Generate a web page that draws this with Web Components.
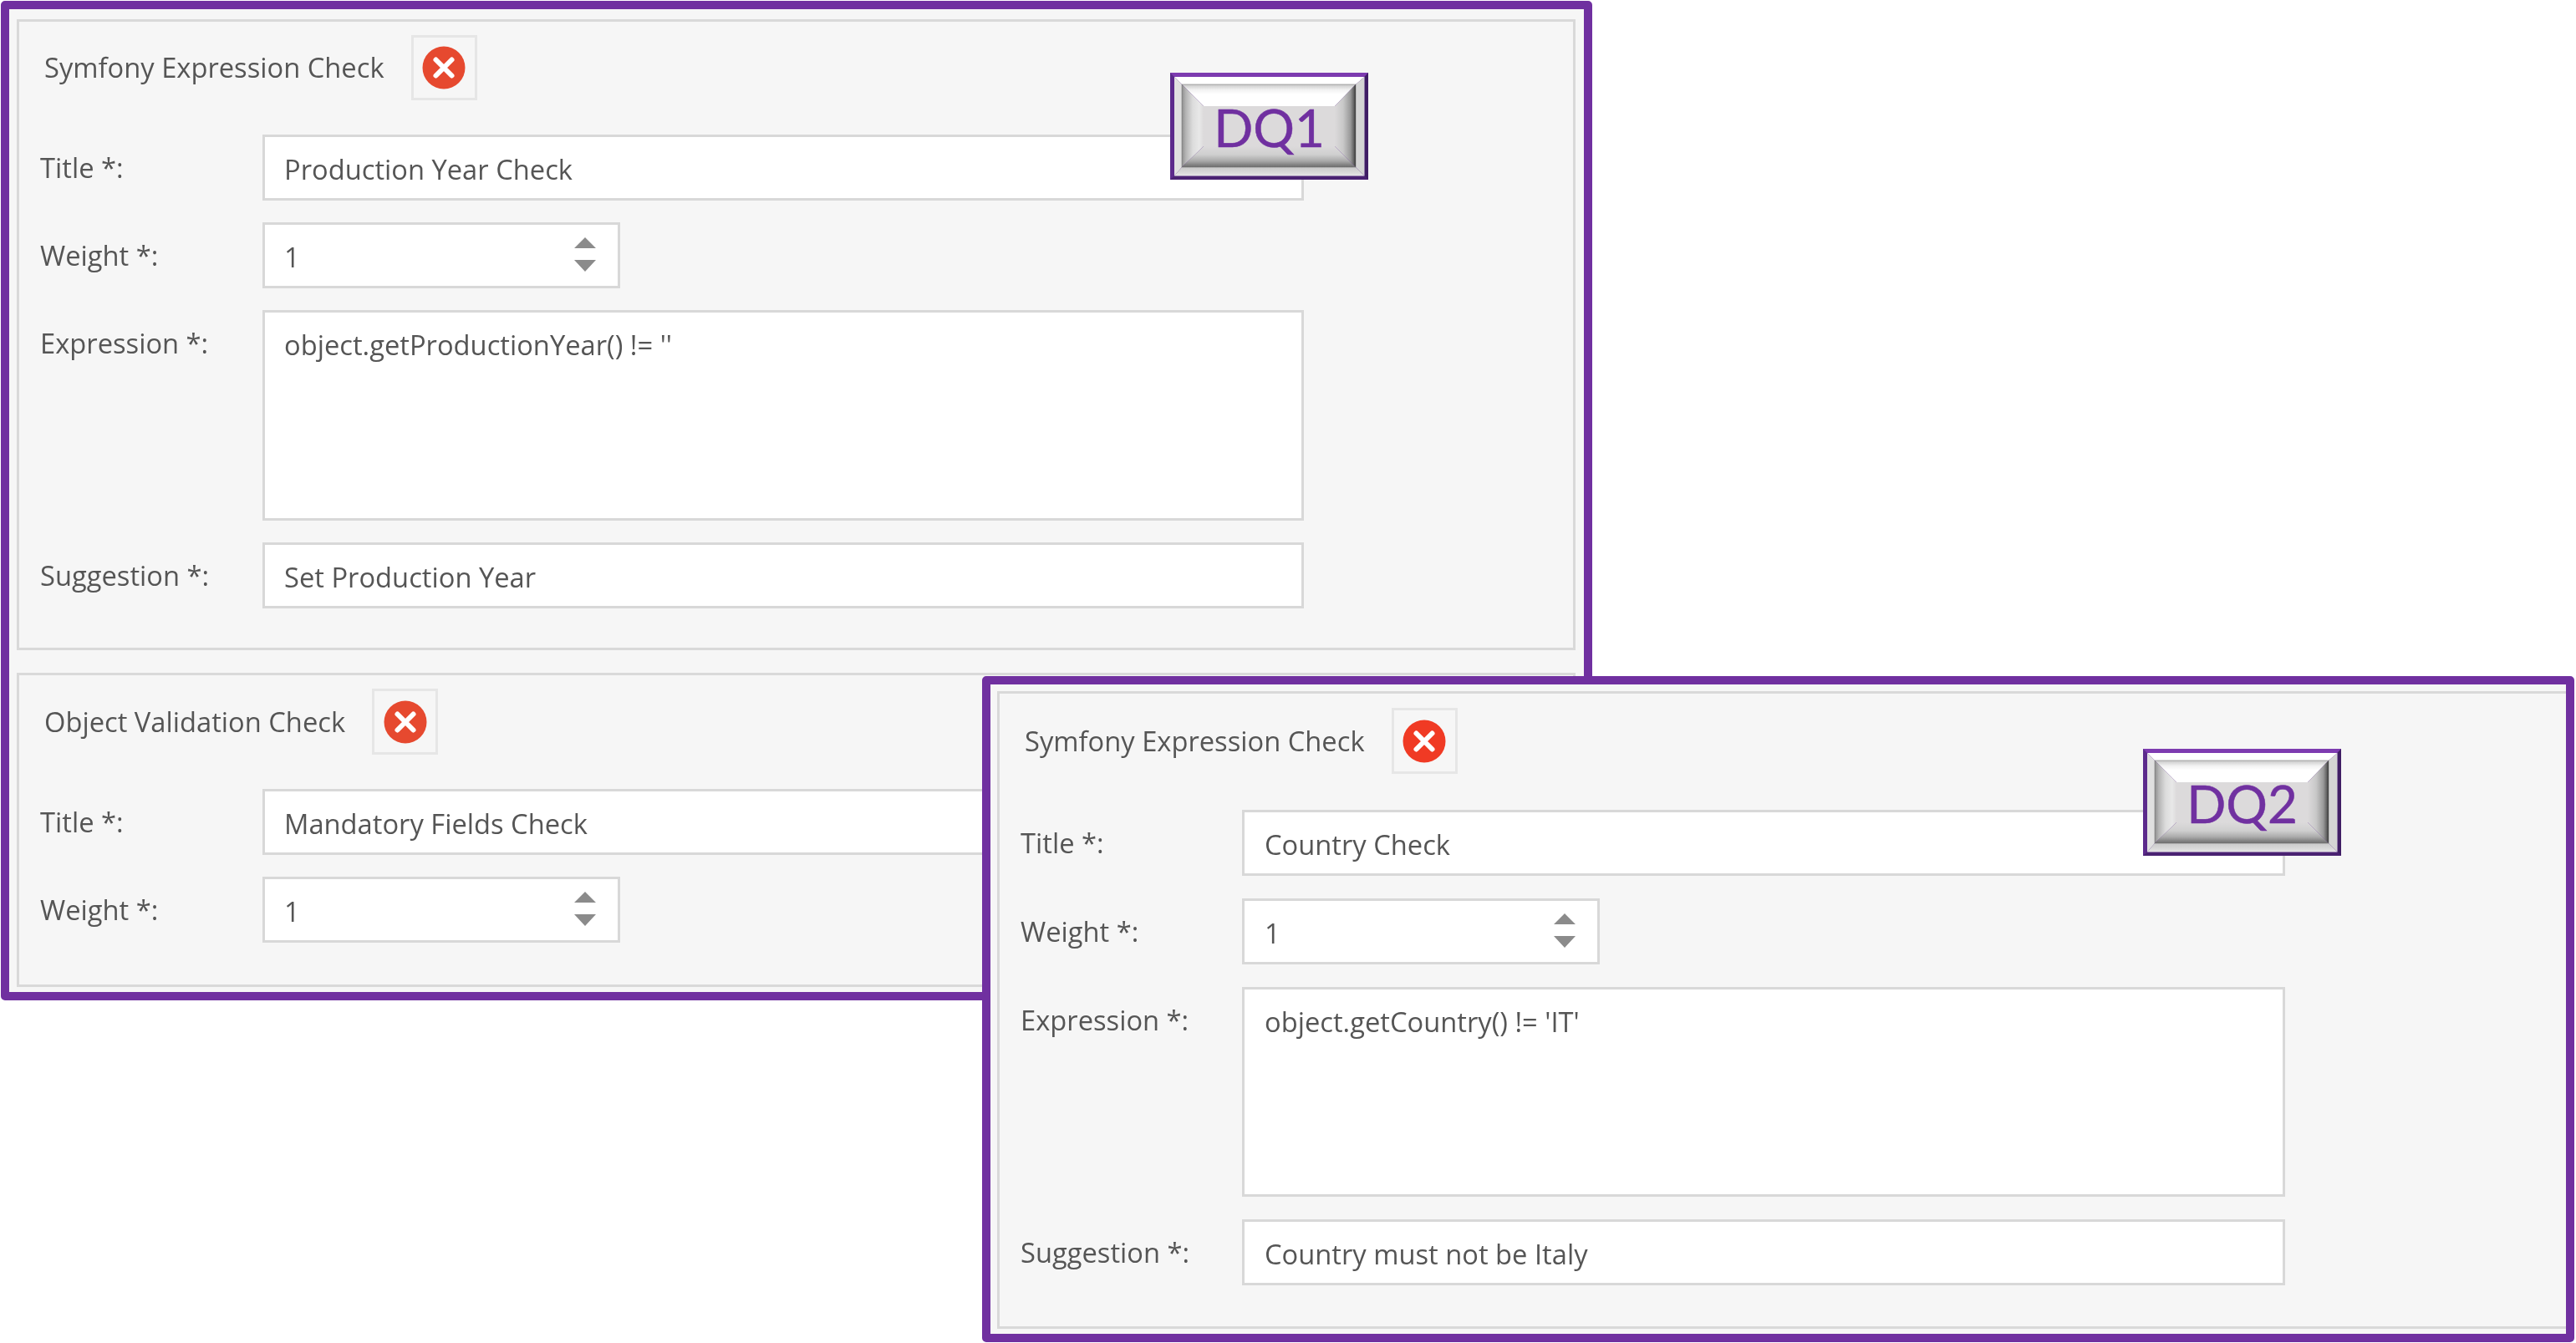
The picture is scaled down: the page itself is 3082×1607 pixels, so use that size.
<!DOCTYPE html>
<html lang="en"><head><meta charset="utf-8"><title>Data quality checks</title>
<style>
html,body{margin:0;padding:0;background:#fff}
body{width:3082px;height:1607px;position:relative;overflow:hidden;font-family:"Open Sans",sans-serif;color:#555}
</style></head><body>
<template id="t-frame"><style>
:host{display:block;position:absolute;box-sizing:border-box;border:10px solid #7030a0;border-radius:5px;background:#f6f6f6;overflow:hidden;padding:var(--pad,12px 10px 9px 9px)}
.stack{display:flex;flex-direction:column;gap:27px}
</style><div class="stack"><slot></slot></div></template>

<template id="t-panel"><style>
:host{display:block;box-sizing:border-box;border:3px solid #d9d9d9;background:#f6f6f6;padding:var(--pt,16px) 0 var(--pb,47px) 25px;margin-right:var(--panel-mr,0)}
header{display:flex;align-items:center;gap:32px;margin:0 0 var(--hm,41px) 5px;height:var(--hh,78px)}
h2{margin:0;font:400 32.7px/80px "Open Sans",sans-serif;color:#555;filter:blur(.55px)}
.rows{display:flex;flex-direction:column;gap:var(--gap,26px)}
</style><header><h2></h2><remove-button></remove-button></header><div class="rows"><slot></slot></div></template>

<template id="t-remove"><style>
:host{box-sizing:border-box;width:79px;height:var(--hh,78px);border:3px solid #e6e6e6;display:flex;align-items:center;justify-content:center;filter:blur(.4px)}
svg{display:block;width:52px;height:52px}
</style><svg viewBox="0 0 52 52" aria-hidden="true"><circle cx="26" cy="26" r="25.5" fill="var(--x-color,#e6492f)"/><path d="M16.5 16.5 35.5 35.5M35.5 16.5 16.5 35.5" stroke="#fff" stroke-width="6" stroke-linecap="round"/></svg></template>

<template id="t-row"><style>
:host{display:flex;align-items:flex-start}
label{flex:none;width:var(--lw,266px);height:78px;font:400 32.7px/80px "Open Sans",sans-serif;color:#555;filter:blur(.55px)}
</style><label></label><slot></slot></template>

<template id="t-field"><style>
:host{display:flex;justify-content:space-between;align-items:center;box-sizing:border-box;width:var(--w,var(--fw,1246px));height:var(--h,79px);background:#fff;border:3px solid #d8d8d8}
span{align-self:flex-start;padding-left:var(--fp,23px);font:400 32.7px/70px "Open Sans",sans-serif;color:#555;margin-top:4px;filter:blur(.55px)}
svg{display:block;width:26px;height:41px;margin:0 26px 2px 0;filter:blur(.4px)}
</style><span><slot></slot></span></template>

<template id="t-badge"><style>
:host{display:flex;position:absolute;width:237px;height:128px;align-items:center;justify-content:center;box-sizing:border-box;padding-top:2px}
svg{position:absolute;inset:0;width:100%;height:100%}
span{position:relative;font:400 62px/1 Lato,sans-serif;color:#7030a0;-webkit-text-stroke:.5px #7030a0}
</style><svg viewBox="0 0 237 128" aria-hidden="true">
<defs>
<linearGradient id="gt" x1="0" y1="0" x2="0" y2="1"><stop offset="0" stop-color="#c8c8c8"/><stop offset=".25" stop-color="#f2f2f2"/><stop offset=".45" stop-color="#fff"/><stop offset="1" stop-color="#fff"/></linearGradient>
<linearGradient id="gl" x1="0" y1="0" x2="1" y2="0"><stop offset="0" stop-color="#8e8e8e"/><stop offset=".18" stop-color="#b4b4b4"/><stop offset=".5" stop-color="#dcdcdc"/><stop offset=".8" stop-color="#e8e8e8"/><stop offset="1" stop-color="#dcdadb"/></linearGradient>
<linearGradient id="gr" x1="0" y1="0" x2="1" y2="0"><stop offset="0" stop-color="#dcdadb"/><stop offset=".4" stop-color="#c8c8c8"/><stop offset=".75" stop-color="#999"/><stop offset=".9" stop-color="#666"/><stop offset="1" stop-color="#333"/></linearGradient>
<linearGradient id="gb" x1="0" y1="0" x2="0" y2="1"><stop offset="0" stop-color="#dcdadb"/><stop offset=".4" stop-color="#cfcfcf"/><stop offset=".7" stop-color="#aaa"/><stop offset=".9" stop-color="#808080"/><stop offset="1" stop-color="#707070"/></linearGradient>
<linearGradient id="go" x1="0" y1="0" x2="0" y2="1"><stop offset="0" stop-color="#c9c9c9"/><stop offset=".5" stop-color="#d6d6d6"/><stop offset="1" stop-color="#e6e6e6"/></linearGradient>
</defs>
<rect width="237" height="128" fill="#5c2a8c"/>
<polygon points="0,0 237,0 232.500,5 5,5" fill="#7d3bb0"/>
<polygon points="0,128 237,128 232.500,123.500 5,123.500" fill="#4a2272"/>
<polygon points="237,0 237,128 232.500,123.500 232.500,5" fill="#3f1d64"/>
<polygon points="5,5 232.500,5 222,14 14,14" fill="#fff"/>
<polygon points="5,5 14,14 14,113 5,123.500" fill="#e0e0e0"/>
<polygon points="232.500,5 222,14 222,113 232.500,123.500" fill="#d4d4d4"/>
<polygon points="5,123.500 14,113 222,113 232.500,123.500" fill="url(#go)"/>
<rect x="40" y="40" width="157" height="48" fill="#dcdadb"/>
<polygon points="14,14 222,14 197,40 40,40" fill="url(#gt)"/>
<polygon points="14,14 40,40 40,88 14,113" fill="url(#gl)"/>
<polygon points="222,14 197,40 197,88 222,113" fill="url(#gr)"/>
<polygon points="14,113 40,88 197,88 222,113" fill="url(#gb)"/>
<rect x="14" y="14" width="208" height="99" fill="none" stroke="#6a6a6a" stroke-opacity=".5" stroke-width="1"/>
</svg><span><slot></slot></span></template>

<check-frame style="left:1px;top:1px;width:1904px;height:1196px">
  <check-panel heading="Symfony Expression Check">
    <form-row label="Title *:"><text-field>Production Year Check</text-field></form-row>
    <form-row label="Weight *:"><text-field number>1</text-field></form-row>
    <form-row label="Expression *:"><text-field style="--h:252px">object.getProductionYear() != ''</text-field></form-row>
    <form-row label="Suggestion *:"><text-field>Set Production Year</text-field></form-row>
  </check-panel>
  <check-panel heading="Object Validation Check" style="--pt:16px;--pb:50px;--hh:79px">
    <form-row label="Title *:"><text-field>Mandatory Fields Check</text-field></form-row>
    <form-row label="Weight *:"><text-field number>1</text-field></form-row>
  </check-panel>
</check-frame>
<dq-badge style="left:1400px;top:87px">DQ1</dq-badge>
<check-frame style="left:1175px;top:809px;width:1905px;height:797px;--pad:8px 0 8px 8px;--x-color:#f03a24;--panel-mr:-20px;--lw:265px;--fw:1248px;--fp:24px">
  <check-panel heading="Symfony Expression Check" style="--pt:17px;--pb:49px;--hh:79px;--hm:43px;--gap:27px">
    <form-row label="Title *:"><text-field>Country Check</text-field></form-row>
    <form-row label="Weight *:"><text-field number>1</text-field></form-row>
    <form-row label="Expression *:"><text-field style="--h:251px">object.getCountry() != 'IT'</text-field></form-row>
    <form-row label="Suggestion *:"><text-field>Country must not be Italy</text-field></form-row>
  </check-panel>
</check-frame>
<dq-badge style="left:2564px;top:896px">DQ2</dq-badge>

<script>
function mount(el,id){const r=el.attachShadow({mode:'open'});r.appendChild(document.getElementById(id).content.cloneNode(true));return r}
customElements.define('remove-button',class extends HTMLElement{constructor(){super();mount(this,'t-remove')}});
customElements.define('check-frame',class extends HTMLElement{constructor(){super();mount(this,'t-frame')}});
customElements.define('check-panel',class extends HTMLElement{connectedCallback(){if(this.shadowRoot)return;const r=mount(this,'t-panel');r.querySelector('h2').textContent=this.getAttribute('heading')}});
customElements.define('form-row',class extends HTMLElement{connectedCallback(){if(this.shadowRoot)return;const r=mount(this,'t-row');r.querySelector('label').textContent=this.getAttribute('label')}});
customElements.define('text-field',class extends HTMLElement{connectedCallback(){if(this.shadowRoot)return;const r=mount(this,'t-field');
 if(this.hasAttribute('number')){this.style.setProperty('--w','428px');
  r.appendChild(document.createRange().createContextualFragment('<svg viewBox="0 0 26 41" aria-hidden="true"><path d="M13 0 26 13H0ZM0 27H26L13 41Z" fill="#8b8b8b"/></svg>'))}}});
customElements.define('dq-badge',class extends HTMLElement{constructor(){super();mount(this,'t-badge')}});
</script>
</body></html>
